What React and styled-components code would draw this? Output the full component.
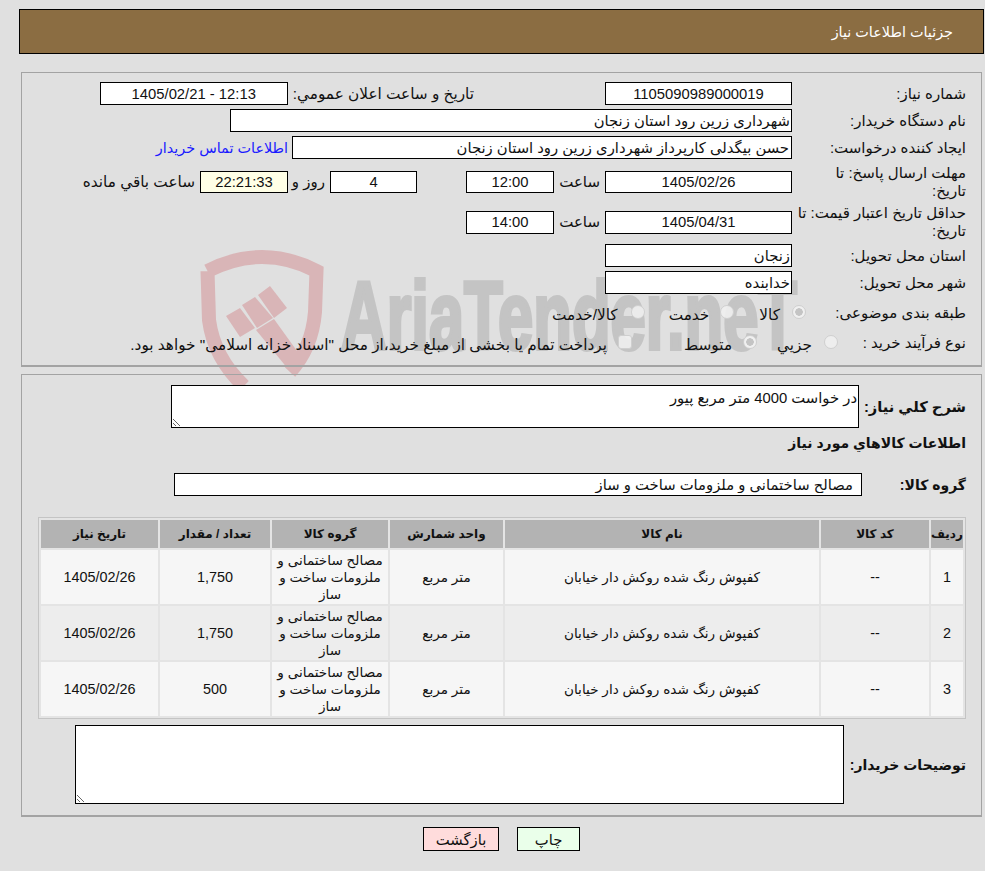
import React from "react";
import styled, { createGlobalStyle } from "styled-components";

// ---------- Global ----------
const GlobalStyle = createGlobalStyle`
  html, body { margin: 0; padding: 0; height: 100%; overflow: hidden; }
  body {
    background: #e0e0e0;
    color: #111;
    font-family: "Liberation Sans", "DejaVu Sans", sans-serif;
    font-size: 15px;
  }
`;

// ---------- Styled Components ----------
const Page = styled.div`
  position: relative;
  width: 985px;
  height: 871px;
  overflow: hidden;
  padding-top: 9px;
  box-sizing: border-box;
`;

const Watermark = styled.svg`
  position: absolute;
  left: 190px;
  top: 240px;
  z-index: 0;
`;

const Header = styled.div`
  direction: rtl;
  box-sizing: border-box;
  width: 965px;
  height: 45px;
  margin-left: 19px;
  padding-right: 30px;
  display: flex;
  align-items: center;
  background: #8b6d42;
  border: 1px solid #000;
  color: #fff;
  font-size: 14.4px;
`;

const Panel = styled.div`
  position: relative;
  z-index: 1;
  direction: rtl;
  box-sizing: border-box;
  width: 961px;
  margin-left: 21px;
  margin-top: ${(p) => p.$top}px;
  padding: ${(p) => p.$pad};
  border: 1px solid #a3a3a3;
  border-bottom-width: 2px;
  display: flex;
  flex-direction: column;
  gap: ${(p) => p.$gap || 0}px;
`;

const Row = styled.div`
  display: flex;
  align-items: center;
  height: ${(p) => p.$h || 23}px;
  margin-top: ${(p) => p.$mt || 0}px;
`;

const Label = styled.div`
  flex: none;
  box-sizing: border-box;
  width: ${(p) => p.$w}px;
  margin-right: ${(p) => p.$mr || 0}px;
  line-height: 18px;
  white-space: nowrap;
`;

const BoldLabel = styled(Label)`
  font-size: ${(p) => p.$fs || 14}px;
  font-weight: bold;
`;

const Text = styled.span`
  flex: none;
  margin-right: ${(p) => p.$mr || 0}px;
  font-size: 15.3px;
  white-space: nowrap;
`;

const OptionText = styled(Text)`
  padding-top: 3px;
`;

const Field = styled.input`
  flex: none;
  box-sizing: border-box;
  width: ${(p) => p.$w}px;
  height: ${(p) => p.$h || 23}px;
  margin: 0 ${(p) => p.$mr || 0}px 0 0;
  padding: 0 ${(p) => p.$pr || 1}px 0 1px;
  border: 1px solid #000;
  background: ${(p) => p.$bg || "#fff"};
  color: #111;
  font: inherit;
  font-size: 14.8px;
  text-align: ${(p) => p.$align || "right"};
  direction: rtl;
  outline: none;
`;

const Area = styled.textarea`
  flex: none;
  display: block;
  box-sizing: border-box;
  width: ${(p) => p.$w}px;
  height: ${(p) => p.$h}px;
  margin: 0;
  padding: 3px 1px 1px;
  border: 1px solid #000;
  background: #fff;
  color: #111;
  font: inherit;
  font-size: 14.8px;
  direction: rtl;
  outline: none;
`;

const ContactLink = styled.a`
  flex: none;
  margin-right: 4px;
  color: #1a1aff;
  font-size: 14.4px;
  text-decoration: none;
`;

const Radio = styled.span`
  flex: none;
  box-sizing: border-box;
  width: 14px;
  height: 14px;
  margin-right: ${(p) => p.$mr || 0}px;
  margin-top: -3px;
  border: 1px solid #cfcfcf;
  border-radius: ${(p) => (p.$square ? "3px" : "50%")};
  background: ${(p) =>
    p.$checked
      ? "radial-gradient(circle, #c4c4c4 0 3.5px, #f0f0f0 4px)"
      : "rgba(240,240,240,.9)"};
`;

const Grid = styled.table`
  box-sizing: border-box;
  width: 928px;
  margin-top: 21px;
  border: 1px solid #c4c4c4;
  border-spacing: 2px;
  border-collapse: separate;
  table-layout: fixed;
  background: #e4e4e4;
  align-self: flex-start;
`;

const Head = styled.th`
  height: 28px;
  padding: 0;
  background: #b3b3b3;
  font-size: 12px;
  font-weight: bold;
  text-align: center;
`;

const Cell = styled.td`
  height: 54px;
  padding: 0;
  background: ${(p) => (p.$even ? "#ededed" : "#f6f6f6")};
  line-height: 17px;
  font-size: 13.6px;
  text-align: center;
`;

const NumberCell = styled(Cell)`
  font-size: 14.4px;
`;

const Footer = styled.div`
  position: relative;
  z-index: 1;
  direction: rtl;
  display: flex;
  justify-content: center;
  gap: 18px;
  width: 961px;
  margin-left: 21px;
  margin-top: 10px;
`;

const Button = styled.button`
  box-sizing: border-box;
  width: ${(p) => p.$w}px;
  height: 24px;
  padding: 0;
  border: 1px solid #000;
  background: ${(p) => p.$bg};
  color: #111;
  font: inherit;
  font-size: 14.8px;
`;

// ---------- Data ----------
const columns = [
  ["ردیف", 32],
  ["کد کالا", 108],
  ["نام کالا", 314],
  ["واحد شمارش", 113],
  ["گروه کالا", 116],
  ["تعداد / مقدار", 110],
  ["تاریخ نیاز", 117],
];

const rows = [
  { id: 1, qty: "1,750" },
  { id: 2, qty: "1,750" },
  { id: 3, qty: "500" },
];

// ---------- Main Component ----------
const App = () => (
  <Page>
    <GlobalStyle />

    <Watermark width="640" height="190" viewBox="0 0 640 190">
      {/* shield ring */}
      <path
        d="M17.5 31 Q45 17 72 17 Q100 17 126.5 31 L125 72 Q122 108 100 132 M17.5 31 L19 80 Q24 118 54 146"
        fill="none"
        stroke="#d9b5b7"
        strokeWidth="14"
      />
      {/* gavel */}
      <g fill="#d9b5b7">
        <path d="M36 76 L50 68 L65 88 L50 97 Z" />
        <path d="M52 65 L65 57 L83 78 L67 88 Z" />
        <path d="M68 55 L80 46 L97 68 L84 78 Z" />
        <path d="M66 90 L84 79 L112 118 L103 135 Z" />
      </g>
      <text
        x="151"
        y="109"
        textLength="456"
        lengthAdjust="spacingAndGlyphs"
        fontFamily="Liberation Sans, sans-serif"
        fontWeight="bold"
        fontSize="96"
        fill="#c4c4c4"
        stroke="#c4c4c4"
        strokeWidth="4"
      >
        AriaTender.neT
      </text>
    </Watermark>

    <Header>جزئیات اطلاعات نیاز</Header>

    <Panel $top={18} $pad="9px 15px 11px 0" $gap={4}>
      <Row>
        <Label $w={174}>شماره نیاز:</Label>
        <Field readOnly $w={187} $align="center" value="1105090989000019" />
        <Text $mr={131}>تاریخ و ساعت اعلان عمومي:</Text>
        <Field readOnly $w={188} $mr={5} $align="center" value="12:13 - 1405/02/21" />
      </Row>
      <Row>
        <Label $w={174}>نام دستگاه خریدار:</Label>
        <Field readOnly $w={562} value="شهرداری زرین رود استان زنجان" />
      </Row>
      <Row>
        <Label $w={174}>ایجاد کننده درخواست:</Label>
        <Field readOnly $w={500} $pr={2} value="حسن بیگدلی کارپرداز شهرداری زرین رود استان زنجان" />
        <ContactLink href="#">اطلاعات تماس خریدار</ContactLink>
      </Row>
      <Row $h={37}>
        <Label $w={174}>مهلت ارسال پاسخ: تا<br />تاریخ:</Label>
        <Field readOnly $w={187} $h={22} $align="center" value="1405/02/26" />
        <Label $w={46} $mr={5}>ساعت</Label>
        <Field readOnly $w={88} $h={22} $align="center" value="12:00" />
        <Field readOnly $w={87} $h={22} $mr={49} $align="center" value="4" />
        <Label $w={37} $mr={5}>روز و</Label>
        <Field readOnly $w={88} $h={22} $bg="#ffffe6" $align="center" value="22:21:33" />
        <Text $mr={5}>ساعت باقي مانده</Text>
      </Row>
      <Row $h={36}>
        <Label $w={174}>حداقل تاریخ اعتبار قیمت: تا<br />تاریخ:</Label>
        <Field readOnly $w={187} $align="center" value="1405/04/31" />
        <Label $w={46} $mr={5}>ساعت</Label>
        <Field readOnly $w={88} $align="center" value="14:00" />
      </Row>
      <Row>
        <Label $w={174}>استان محل تحویل:</Label>
        <Field readOnly $w={187} value="زنجان" />
      </Row>
      <Row>
        <Label $w={174}>شهر محل تحویل:</Label>
        <Field readOnly $w={187} value="خدابنده" />
      </Row>
      <Row $h={30}>
        <Label $w={160}>طبقه بندی موضوعی:</Label>
        <Radio $checked />
        <OptionText $mr={12}>کالا</OptionText>
        <Radio $mr={25} />
        <OptionText $mr={11}>خدمت</OptionText>
        <Radio $mr={24} />
        <OptionText $mr={13}>کالا/خدمت</OptionText>
      </Row>
      <Row $h={22}>
        <Label $w={128}>نوع فرآیند خرید :</Label>
        <Radio />
        <OptionText $mr={12}>جزیي</OptionText>
        <Radio $mr={20} $checked />
        <OptionText $mr={11}>متوسط</OptionText>
        <Radio $mr={52} $square />
        <OptionText $mr={11}>پرداخت تمام یا بخشی از مبلغ خرید،از محل "اسناد خزانه اسلامی" خواهد بود.</OptionText>
      </Row>
    </Panel>

    <Panel $top={7} $pad="10px 15px 11px 0">
      <Row $h={43}>
        <BoldLabel $w={107} $fs={14.7}>شرح کلي نیاز:</BoldLabel>
        <Area $w={688} $h={43} readOnly defaultValue="در خواست 4000 متر مربع پیور" />
      </Row>
      <Row $h={30}>
        <BoldLabel $w={300}>اطلاعات کالاهاي مورد نیاز</BoldLabel>
      </Row>
      <Row $mt={15}>
        <BoldLabel $w={104}>گروه کالا:</BoldLabel>
        <Field readOnly $w={688} $pr={8} value="مصالح ساختمانی و ملزومات ساخت و ساز" />
      </Row>
      <Grid>
        <colgroup>
          {columns.map(([title, w]) => (
            <col key={title} style={{ width: w }} />
          ))}
        </colgroup>
        <thead>
          <tr>
            {columns.map(([title]) => (
              <Head key={title}>{title}</Head>
            ))}
          </tr>
        </thead>
        <tbody>
          {rows.map((r) => (
            <tr key={r.id}>
              <NumberCell $even={r.id % 2 === 0}>{r.id}</NumberCell>
              <NumberCell $even={r.id % 2 === 0}>--</NumberCell>
              <Cell $even={r.id % 2 === 0}>کفپوش رنگ شده روکش دار خیابان</Cell>
              <Cell $even={r.id % 2 === 0}>متر مربع</Cell>
              <Cell $even={r.id % 2 === 0}>مصالح ساختمانی و ملزومات ساخت و ساز</Cell>
              <NumberCell $even={r.id % 2 === 0}>{r.qty}</NumberCell>
              <NumberCell $even={r.id % 2 === 0}>1405/02/26</NumberCell>
            </tr>
          ))}
        </tbody>
      </Grid>
      <Row $h={79} $mt={6}>
        <BoldLabel $w={122}>توضیحات خریدار:</BoldLabel>
        <Area $w={769} $h={79} readOnly />
      </Row>
    </Panel>

    <Footer>
      <Button $w={63} $bg="#eaffea">چاپ</Button>
      <Button $w={76} $bg="#ffdcdc">بازگشت</Button>
    </Footer>
  </Page>
);

export default App;
